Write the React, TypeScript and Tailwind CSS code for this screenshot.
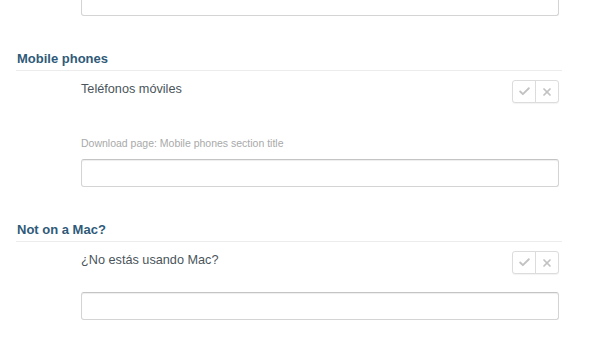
import { Check, X } from 'lucide-react';

function ReviewButtons() {
  return (
    <div className="flex h-[23px] w-[47px] rounded-[3px] border border-[#dcdcdc] shadow-[0_1px_1px_rgba(0,0,0,0.05)] bg-white">
      <span className="flex flex-1 items-center justify-center border-r border-[#dcdcdc]">
        <Check className="w-[13px] h-[13px] text-[#c2c2c2]" strokeWidth={3.4} />
      </span>
      <span className="flex flex-1 items-center justify-center">
        <X className="w-[12px] h-[12px] text-[#c2c2c2]" strokeWidth={3.4} />
      </span>
    </div>
  );
}

function TextField({ className = '' }: { className?: string }) {
  return (
    <input
      type="text"
      className={`block h-[28px] w-[478px] ml-[81px] rounded-[3px] border border-[#d4d4d4] border-t-[#c4c4c4] bg-white shadow-[inset_0_1px_1px_rgba(0,0,0,0.07)] ${className}`}
    />
  );
}

function Section({ title, source, hint }: { title: string; source: string; hint?: string }) {
  return (
    <div className="mt-[35px]">
      <div className="ml-[16px] w-[546px] border-b border-[#ececec] pb-[3px] pl-[1px]">
        <h3 className="text-[13px] leading-[16px] font-bold text-[#2f5a79]">{title}</h3>
      </div>
      <div className="ml-[81px] w-[478px] pt-[9px] flex justify-between items-start">
        <p className="mt-[1px] text-[12.7px] leading-[16px] text-[#4a555b]">{source}</p>
        <ReviewButtons />
      </div>
      {hint ? (
        <>
          <p className="ml-[81px] mt-[34px] text-[10.5px] leading-[12px] text-[#a9a9a9]">{hint}</p>
          <TextField className="mt-[10px]" />
        </>
      ) : (
        <TextField className="mt-[18px]" />
      )}
    </div>
  );
}

export default function App() {
  return (
    <div className="w-[615px] h-[344px] bg-white overflow-hidden font-['Liberation_Sans',Arial,sans-serif]">
      <TextField className="-mt-[12px]" />
      <Section
        title="Mobile phones"
        source="Teléfonos móviles"
        hint="Download page: Mobile phones section title"
      />
      <Section title="Not on a Mac?" source="¿No estás usando Mac?" />
    </div>
  );
}
